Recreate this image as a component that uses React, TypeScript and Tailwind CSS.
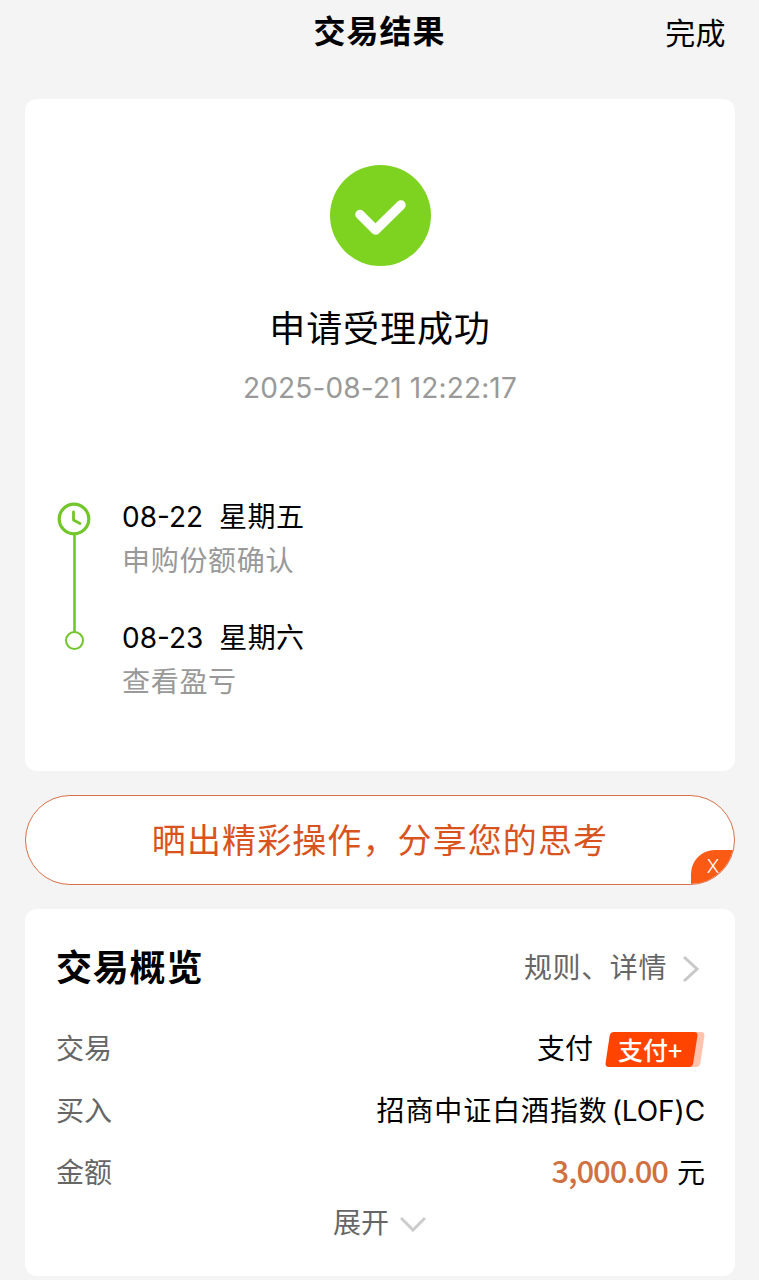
interface Step {
  date: string
  day: string
  label: string
}

const steps: Step[] = [
  { date: '08-22', day: '星期五', label: '申购份额确认' },
  { date: '08-23', day: '星期六', label: '查看盈亏' },
]

function Header() {
  return (
    <header className="relative h-[99px] pt-[10px] flex justify-center">
      <h1 className="text-[32px] leading-[44px] tracking-[1px] font-bold">交易结果</h1>
      <button className="absolute right-[33px] top-[11px] text-[30px] leading-[44px] tracking-[0.4px]">完成</button>
    </header>
  )
}

function Timeline() {
  return (
    <div className="flex mt-[92px] pl-[32px]">
      <svg className="shrink-0" width="34" height="150" viewBox="0 0 34 150" fill="none" stroke="#72c62c">
        <circle cx="17" cy="19" r="14.8" strokeWidth="3.2" />
        <path d="M16.5 12v8l6.5 3.5" strokeWidth="2.8" strokeLinecap="round" strokeLinejoin="round" />
        <path d="M17.5 34v98" strokeWidth="2.6" />
        <circle cx="17.5" cy="140.5" r="8.5" strokeWidth="2" />
      </svg>
      <div className="-mt-[3px] ml-[31px] flex flex-col gap-[35px]">
        {steps.map((step) => (
          <div key={step.date}>
            <p className="flex gap-[16px] text-[28px] leading-[40px]">
              <span>{step.date}</span>
              <span className="tracking-[0.4px]">{step.day}</span>
            </p>
            <p className="mt-[2px] text-[28px] leading-[44px] tracking-[0.7px] text-[#999]">{step.label}</p>
          </div>
        ))}
      </div>
    </div>
  )
}

function ResultCard() {
  return (
    <section className="h-[672px] rounded-xl bg-white pt-[66px]">
      <svg className="mx-auto block" width="102" height="102" viewBox="0 0 102 102" fill="none">
        <circle cx="51.5" cy="50.5" r="50.5" fill="#7ed321" />
        <path d="M31 49.5L46.5 65L72 40" stroke="#fff" strokeWidth="9.5" strokeLinecap="round" strokeLinejoin="round" />
      </svg>
      <h2 className="mt-[38px] text-center text-[36px] leading-[48px] tracking-[0.9px]">申请受理成功</h2>
      <p className="mt-[15px] text-center text-[28px] leading-[40px] tracking-[0.15px] text-[#999]">2025-08-21 12:22:17</p>
      <Timeline />
    </section>
  )
}

function ShareBanner() {
  return (
    <div className="relative mt-[24px] flex h-[90px] items-center justify-center overflow-hidden rounded-full border border-[#d9704a] bg-white">
      <span className="text-[34px] tracking-[1.1px] text-[#d9531e]">晒出精彩操作，分享您的思考</span>
      <button className="absolute -right-px -bottom-px flex h-[35px] w-[44px] items-center justify-center rounded-tl-[24px] bg-[#fb5a14] text-[19px] font-light text-white">
        X
      </button>
    </div>
  )
}

function PayTag() {
  return (
    <span className="relative ml-[12px] flex h-[36px] w-[100px] items-center pl-[13px]">
      <svg className="absolute inset-0" width="100" height="36" viewBox="0 0 100 36">
        <path d="M14 1h82q4 0 3.4 4l-4 27q-.6 4-4.400 4H12z" fill="#ffc3ae" />
        <path d="M9 1h80q4 0 3.400 4l-4.200 27q-.6 4-4.200 4H4q-4 0-3.400-4L4.600 5q.6-4 4.400-4z" fill="#ff4400" />
      </svg>
      <span className="relative mt-px text-[25px] leading-[36px] font-medium text-white">
        支付<span className="font-['Noto_Sans_CJK_SC',sans-serif]">+</span>
      </span>
    </span>
  )
}

function OverviewCard() {
  return (
    <section className="mt-[24px] h-[367px] rounded-xl bg-white pt-[34px] pr-[30px] pl-[31px]">
      <div className="flex h-[50px] items-center justify-between">
        <h3 className="text-[36px] leading-[50px] tracking-[0.8px] font-bold">交易概览</h3>
        <button className="flex items-center text-[28px] tracking-[0.6px] text-[#666]">
          规则、详情
          <svg className="mt-[2px] mr-[6px] ml-[15px]" width="17" height="28" viewBox="0 0 17 28" fill="none" stroke="#c8c8c8" strokeWidth="3">
            <path d="M2 2L15 14L2 26" />
          </svg>
        </button>
      </div>
      <dl className="mt-[25px] text-[28px] leading-[62px]">
        <div className="flex h-[62px] items-center justify-between">
          <dt className="text-[#666]">交易</dt>
          <dd className="flex items-center">
            支付
            <PayTag />
          </dd>
        </div>
        <div className="flex h-[62px] items-center justify-between">
          <dt className="text-[#666]">买入</dt>
          <dd>
            <span className="tracking-[0.9px]">招商中证白酒指数</span>
            <span className="ml-[4px] tracking-[-0.1px]">(LOF)C</span>
          </dd>
        </div>
        <div className="flex h-[62px] items-center justify-between">
          <dt className="text-[#666]">金额</dt>
          <dd className="flex">
            <span className="-mt-[3px] mr-[9px] font-['Noto_Sans_CJK_SC',sans-serif] text-[31px] tracking-[-1px] font-medium text-[#d0713f]">
              3,000.00
            </span>
            元
          </dd>
        </div>
      </dl>
      <button className="mx-auto -mt-px flex h-[40px] -translate-x-px items-center text-[28px] leading-[40px] text-[#666]">
        展开
        <svg className="mt-px ml-[11px]" width="26" height="16" viewBox="0 0 26 16" fill="none" stroke="#ccc" strokeWidth="3">
          <path d="M1 2L13 14L25 2" />
        </svg>
      </button>
    </section>
  )
}

export default function App() {
  return (
    <main className="h-[1280px] overflow-hidden bg-[#f4f4f4] pr-[24px] pl-[25px] font-[Inter,'Noto_Sans_CJK_SC',sans-serif] text-black">
      <div className="-mr-[24px] -ml-[25px]">
        <Header />
      </div>
      <ResultCard />
      <ShareBanner />
      <OverviewCard />
    </main>
  )
}
